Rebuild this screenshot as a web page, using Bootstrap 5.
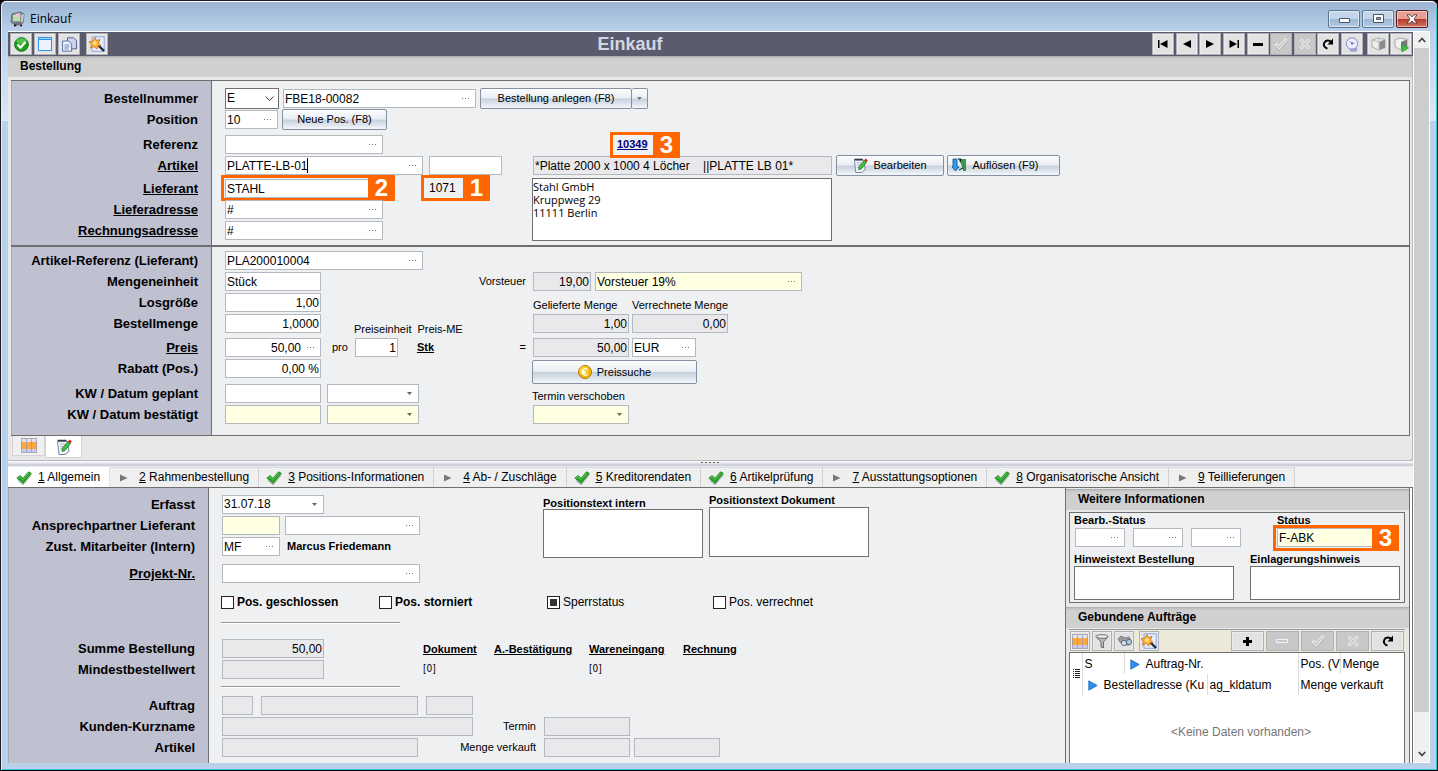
<!DOCTYPE html>
<html lang="de">
<head>
<meta charset="utf-8">
<meta name="viewport" content="width=device-width, initial-scale=1">
<title>Einkauf</title>
<link rel="stylesheet" href="https://cdn.jsdelivr.net/npm/bootstrap@5.3.0/dist/css/bootstrap.min.css">
<style>
:root{--pane:#eff0f2;--lilac:#bfc0d0;--line:#6f6f70;--fieldline:#b4b8bf;--orange:#ff6600;--row:21px}
body{font-family:"Liberation Sans",Arial,sans-serif;font-size:12px;line-height:15px;color:#000;background:#000}
a{color:inherit}
button{padding:0;color:inherit}
.win{min-height:100vh;border:1px solid #1c1c22;border-bottom-color:#000;border-radius:6px 6px 0 0;box-shadow:inset 0 1px #fff,inset 1px 0 #e3edf8,inset -1px -1px #35c4dc;padding:1px 7px 7px;
 background:linear-gradient(#9ab3d1 0,#b8d0ea 30px,#dce8f5 120px,#b9d1ea 120px)}
.titlebar{height:29px;padding:4px 2px 0;font-family:"Open Sans","Noto Sans",sans-serif}
.winbtns{gap:2px}
.winbtn{width:32px;height:18px;border:1px solid #5c7590;border-radius:2px;box-shadow:inset 0 0 0 1px rgba(255,255,255,.5);background:linear-gradient(#c3d5e9 50%,#9cb6d2 50%,#b5cce4)}
.winbtn.shut{border-color:#5a1a1a;background:linear-gradient(#e5a093 48%,#b8382a 50%,#cf7560)}
.tools{height:25px;background:#5a5c6d;border-top:1px solid #fff;padding:1px 1px 1px 2px;color:#000}
.tools h1{font-size:18px;line-height:22px;font-weight:700;color:#d3d7e4}
.tb{width:22px;height:22px;background:#e2e2e2;border:1px solid #aeb0b6;box-shadow:inset 0 0 0 1px #ececec;display:flex;align-items:center;justify-content:center;flex:none}
.tb:disabled{background:#c8c8c8;box-shadow:none}
.navset{width:211px}
.panel{background:#e8e8e8;border:1px solid #b9b9bb;border-top:0;border-left:0;border-radius:0 0 3px 3px}
.forms{margin:3px 2px 0 3px}
.phead{height:21px;line-height:21px;background:linear-gradient(#a8a8a8 0,#c8c8c8 2px,#d0d0d0 4px);font-weight:700;padding-left:12px;margin:0;font-size:12px}
.lpane{width:200px;background:var(--lilac);font-size:13px;font-weight:700;text-align:right;padding-right:13px;flex:none;border-left:1px solid #a5a6b8}
.lpane>*{display:block;height:var(--row);line-height:var(--row);color:#000;white-space:nowrap}
.cpane{background:var(--pane);border-left:1px solid var(--line);padding-left:13px}
.r{display:flex;align-items:center;height:var(--row);flex:none}
.g2{margin-top:2px!important}.g3{margin-top:3px!important}.g4{margin-top:4px!important}.g6{margin-top:6px!important}.g8{margin-top:8px!important}
.fld{display:flex;align-items:center;height:19px;border:1px solid var(--fieldline);background:#fff;position:relative;flex:none}
.fld input,input.fld,select.fld{min-width:0;font-size:12px;line-height:15px;padding:0 1px;color:#000;border-radius:0;outline:0}
.fld input{border:0;background:transparent;width:100%;height:17px}
.fld.num input,input.num{text-align:right}
.fld button{border:0;background:transparent;width:18px;height:17px;flex:none;display:flex;align-items:center;justify-content:center}
.ro{background:#e9e9eb!important}
.ye{background:#ffffe1!important}
select.fld{appearance:none;background:#fff url("data:image/svg+xml,%3Csvg xmlns='http://www.w3.org/2000/svg' width='5' height='3'%3E%3Cpath d='M0 0h5L2.500 3z' fill='%23666'/%3E%3C/svg%3E") no-repeat right 6px center}
select.due{background-color:#ffffe1}
select.kind{height:21px;border-color:#707070;background-image:url("data:image/svg+xml,%3Csvg xmlns='http://www.w3.org/2000/svg' width='9' height='6'%3E%3Cpath d='M.5.5l4 4 4-4' fill='none' stroke='%23444'/%3E%3C/svg%3E");background-position:right 4px center}
textarea.box{border:1px solid #707070;background:#fff;resize:none;display:block;padding:1px 0;outline:0;border-radius:0}
.gbtn{height:21px;border:1px solid #8391a3;border-radius:2px;font-size:11px;line-height:13px;background:linear-gradient(#fdfdfe 0,#e9edf2 48%,#c6d1dc 52%,#dfe6ee 80%,#f5f8fa);display:flex;align-items:center;justify-content:center;gap:5px;flex:none}
.sm{font-size:11px;line-height:13px;white-space:nowrap}
.call{position:absolute;border:3px solid var(--orange);height:26px;pointer-events:none}
.call b{position:absolute;right:-3px;top:-3px;width:27px;height:26px;line-height:26px;background:var(--orange);color:#fff;font-size:24px;text-align:center}
.caret{position:absolute;width:1px;height:15px;left:81px;top:1px;background:#000}
.w31{width:31px}.w43{width:43px}.w50{width:50px}.w53{width:53px}.w54{width:54px}.w58{width:58px}.w64{width:64px}.w73{width:73px}.w86{width:86px}.w92{width:92px}.w96{width:96px}.w102{width:102px}.w135{width:135px}.w158{width:158px}.w193{width:193px}.w196{width:196px}.w198{width:198px}.w207{width:207px}.w251{width:251px}.w299{width:299px}.w300{width:300px}.w120{width:120px}.w47{width:47px}
.lstack{width:307px;flex:none}
.modes{height:24px;padding-left:4px;align-items:flex-start}
.modes button{height:20px;width:33px;border:1px solid #d4d4d4;border-top:0;background:#f0f0f0}
.modes .on{height:22px;width:37px;background:#fff}
.splitter{height:6px;background:linear-gradient(#fff,#dfe3ea 40%,#c4c9d2 70%,#f4f5f7);display:flex;justify-content:center}
.tabs{flex-wrap:nowrap;height:21px;background:#f2f2f2;border-bottom:1px solid var(--line);--bs-nav-tabs-border-width:0px}
.tabs .nav-link{height:20px;padding:0 9px 0 7px;display:flex;align-items:center;gap:6px;border:0;border-right:1px solid #d0d0d0;border-top:1px solid #dcdcdc;border-radius:0;color:#000;background:#efefef;font-size:12px;white-space:nowrap}
.tabs .nav-link.active{background:#fff;border-top-color:#fff;padding-left:8px}
.tabs .nav-link svg{width:16px;flex:none}
.lower{min-height:270px}
.lower .lpane{padding-top:6px}
.rule{width:179px;height:2px;border:0;border-top:1px solid #999;background:#fff;opacity:1;margin:0}
.chk{display:flex;align-items:center;gap:3px}
.chk input{appearance:none;width:13px;height:13px;border:1px solid #222;background:#fff;margin:0}
.chk input:checked{background:#333;box-shadow:inset 0 0 0 2px #fff}
.checks{display:grid;grid-template-columns:158px 168px 166px auto;justify-content:start;margin-left:-1px}
.links{display:grid;grid-template-columns:71px 95px 94px auto;justify-content:start;font-size:11px;line-height:13px;row-gap:0}
.links span{font-family:"DejaVu Sans Condensed",sans-serif;font-size:10px}
.side{width:344px;flex:none;border-left:1px solid var(--line);background:#e8e8e8;padding-top:1px}
.edge{width:4px;border:1px solid var(--line);border-width:0 1px;background:#fff;flex:none}
.group{border:1px solid var(--line);background:var(--pane);margin:2px 4px 4px 3px;height:91px}
.minibar{background:#ece9d8;border-top:1px solid #9a9a9a;margin:1px 4px 0 3px;height:23px;padding:1px}
.minibar .tb{width:20px;height:20px}
.minibar .tb.wide{width:33px}
.listing{background:#fff;margin:0 4px 0 3px;border:1px solid var(--line);border-bottom:0}
.listing table{table-layout:fixed;width:100%;border-collapse:collapse}
.listing th{font-weight:400;height:21px;padding:2px 0 0 2px;border-left:1px solid #dcdcdc;white-space:nowrap;overflow:hidden}
.listing th svg{margin:0 6px 0 3px}
.listing th[rowspan]{border:0;padding:0}
.listing th[rowspan] svg{margin:0 0 0 3px}
.vbar{width:17px;background:#f0f0f0;border:1px solid #fff;flex:none}
.vbar button{height:16px;border:0;background:transparent}
.thumb{background:#cdcdcd;height:664px;flex-shrink:1}
</style>
</head>
<body>
<svg class="d-none" aria-hidden="true">
 <symbol id="dots" viewBox="0 0 8 1"><path d="M0 0h1v1H0zM3 0h1v1H3zM6 0h1v1H6z" fill="#777"/></symbol>
 <symbol id="tick" viewBox="0 0 16 14"><path d="M2 9.500 7 13.500 15.500 3.500" stroke="#9a9a9a" stroke-width="1.500" fill="none" opacity=".6"/><path d="M.8 7 4 4.500l3 2.700L12.500.8l2.800 1.400L7.200 12.500z" fill="#2aa52c" stroke="#187a1c" stroke-width=".7"/><path d="M2 7l2-1.300 3 2.800L12.800 2" stroke="#5fcf50" stroke-width=".9" fill="none"/></symbol>
 <symbol id="tri" viewBox="0 0 16 14"><path d="M3 3.500 10.500 7 3 10.500z" fill="#777"/></symbol>
 <symbol id="blue" viewBox="0 0 10 11"><path d="M.8.8 9.200 5.500.8 10.200z" fill="#2f8ff0" stroke="#1765c0" stroke-width=".8"/></symbol>
 <symbol id="grid" viewBox="0 0 16 15"><path d="M0 0h16v15H0z" fill="#e2e2f6"/><path d="M0 4h16v7H0z" fill="#ffa63c"/><path d="M0 11h16v4H0z" fill="#c9c9ee"/><path d="M.5 0v15M5.500 0v15M10.500 0v15M15.500 0v15" stroke="#9a98a0" fill="none" opacity=".75"/><path d="M0 .5h16M0 14.500h16" stroke="#a9a8b4"/></symbol>
 <symbol id="edit" viewBox="0 0 16 16"><path d="M1.500 2.500h10l1.500 10-4 3H3z" fill="#f4f6fb" stroke="#6a7090" stroke-width=".9"/><path d="M1.500 1.500h9" stroke="#333a50" stroke-width="1.500"/><path d="M4 5h5M4 7.500h4M4 10h2" stroke="#9a9fc0" stroke-width=".8"/><path d="M6 12.500 6.500 9l5.500-6.500 2.500 2L9 11.500z" fill="#3fc03f" stroke="#187a1c" stroke-width=".8"/><path d="m12 2.500 1.500-2 2.300 1.800-1.300 2.200z" fill="#e0231c"/></symbol>
 <symbol id="wand" viewBox="0 0 16 16"><path d="M3 .8h12.200v14.500H3z" fill="#e6eefb" stroke="#8ca6dd"/><path d="m9 9 6 6" stroke="#222c3c" stroke-width="2.400"/><path d="m6 1.500 1.500 3L11 3.500 9.500 7l2.500 2.500-3.500.5L8 13 5 10.500 1.500 12l1-3.500L0 6l3.500-.7z" fill="#ffb733" stroke="#c9681a" stroke-width=".8"/><circle cx="6" cy="7" r="1.700" fill="#ffe9a0"/></symbol>
 <symbol id="redo" viewBox="0 0 14 14"><path d="M6.500 11.500A4 4 0 1 1 10 5" fill="none" stroke="#000" stroke-width="2"/><path d="M12 1.500V7.500H6.500z"/></symbol>
 <symbol id="okay" viewBox="0 0 14 14"><path d="m1 8 2-1.500 2 2L11.500 1.500 13 3 5.500 12z" fill="#c8c8c8" stroke="#f8f8f8"/><path d="m1 9 4.500 4.500L13.500 4" fill="none" stroke="#a2a2a2" stroke-width=".6"/></symbol>
 <symbol id="nope" viewBox="0 0 14 14"><path d="m2 3.500 1.500-1.500L7 5.500 10.500 2 12 3.500 8.500 7l3.500 3.500-1.500 1.500L7 8.500 3.500 12 2 10.500 5.500 7z" fill="#c8c8c8" stroke="#f8f8f8"/></symbol>
</svg>

<div class="win d-flex flex-column">
 <header class="titlebar d-flex align-items-center">
  <svg width="16" height="16" viewBox="0 0 16 16" class="me-1"><path d="m2 3 8-2 4 2-1 9-8 2-4-3z" fill="#8f9096" stroke="#55565c" stroke-width=".8"/><path d="M3 4h7v6H3z" fill="#b8e0a8"/><path d="m5 3 5-1v4H5z" fill="#e9c4d4"/><path d="m11 4 3-1-1 8-2 1z" fill="#c4c5cb"/><path d="M3 12l8-1 2 2-7 2z" fill="#6e6f75"/><circle cx="5" cy="14.500" r="1"/><circle cx="11" cy="14.500" r="1"/></svg>
  <span class="flex-grow-1">Einkauf</span>
  <div class="winbtns d-flex">
   <button class="winbtn d-flex align-items-center justify-content-center" aria-label="Minimieren"><svg width="11" height="11" viewBox="0 0 11 11"><path d="M.5 5.500h10v4H.5z" fill="#fff" stroke="#4b5668"/></svg></button>
   <button class="winbtn d-flex align-items-center justify-content-center" aria-label="Maximieren"><svg width="11" height="9" viewBox="0 0 11 9"><path d="M.5.500h10v8H.5z" fill="#fff" stroke="#4b5668"/><path d="M3.500 3.500h4v2h-4z" fill="#8fb0d6" stroke="#4b5668"/></svg></button>
   <button class="winbtn shut d-flex align-items-center justify-content-center" aria-label="Schließen"><svg width="12" height="10" viewBox="0 0 12 10"><path d="M1 .8h3L6 3 8 .8h3L8 5l3 4.200H8L6 7 4 9.200H1L4 5z" fill="#fff" stroke="#57383c" stroke-width=".9"/></svg></button>
  </div>
 </header>

 <div class="d-flex flex-grow-1">
 <main class="flex-grow-1 d-flex flex-column">
  <div class="tools d-flex align-items-start">
   <div class="d-flex" style="gap:6px">
    <div class="d-flex" style="gap:2px">
     <button class="tb" aria-label="OK"><svg width="15" height="15" viewBox="0 0 15 15"><circle cx="7.500" cy="7.500" r="6.800" fill="#1da01f" stroke="#0d7010"/><ellipse cx="7.500" cy="4" rx="5" ry="2.800" fill="#6bd15f" opacity=".7"/><path d="m3.500 7.500 3 3L11.500 5" fill="none" stroke="#fff" stroke-width="2.300"/></svg></button>
     <button class="tb" aria-label="Fenster"><svg width="14" height="14" viewBox="0 0 14 14"><path d="M.5.500h13v13H.5z" fill="#eef2ff" stroke="#2f93e8"/><path d="M0 0h14v3H0z" fill="#2f93e8"/><path d="M1 1h12v1H1z" fill="#9fd6ff"/></svg></button>
     <button class="tb" aria-label="Kopieren"><svg width="15" height="15" viewBox="0 0 15 15"><path d="M5.500.800h6l3 3v8h-9z" fill="#cfd3ee" stroke="#5b639c"/><path d="M.6 4h6l3 3v7.200h-9z" fill="#eef2fc" stroke="#5b76ac"/><path d="M2.500 8h5M2.500 10h5M2.500 12h4" stroke="#6b86c4"/></svg></button>
    </div>
    <button class="tb" aria-label="Assistent"><svg width="16" height="16"><use href="#wand"/></svg></button>
   </div>
   <h1 class="flex-grow-1 text-center m-0">Einkauf</h1>
   <div class="d-flex gap-1">
    <div class="navset d-flex justify-content-between">
     <button class="tb" aria-label="Erster"><svg width="10" height="8" viewBox="0 0 10 8"><path d="M0 0h1.500v8H0zM9.500 0v8L2 4z"/></svg></button>
     <button class="tb" aria-label="Zurück"><svg width="8" height="8" viewBox="0 0 8 8"><path d="M8 0v8L0 4z"/></svg></button>
     <button class="tb" aria-label="Weiter"><svg width="8" height="8" viewBox="0 0 8 8"><path d="M0 0v8l8-4z"/></svg></button>
     <button class="tb" aria-label="Letzter"><svg width="10" height="8" viewBox="0 0 10 8"><path d="M8.500 0H10v8H8.500zM.5 0v8L8 4z"/></svg></button>
     <button class="tb" aria-label="Löschen"><svg width="10" height="3"><path d="M0 0h10v3H0z"/></svg></button>
     <button class="tb" disabled aria-label="Übernehmen"><svg width="14" height="14"><use href="#okay"/></svg></button>
     <button class="tb" disabled aria-label="Verwerfen"><svg width="14" height="14"><use href="#nope"/></svg></button>
     <button class="tb" aria-label="Aktualisieren"><svg width="14" height="14"><use href="#redo"/></svg></button>
     <button class="tb" aria-label="Historie"><svg width="14" height="15" viewBox="0 0 14 15"><ellipse cx="8.500" cy="12.500" rx="3.500" ry="2" fill="#a9a9d8" stroke="#8a8ac6" stroke-width=".6"/><circle cx="7" cy="6.500" r="5.700" fill="#ececff" stroke="#8a8ac6"/><path d="M4.500 4l2.500 2.500L9.500 6" stroke="#8585c4" stroke-width=".8" fill="none"/><circle cx="7" cy="6.500" r="1" fill="#4a4a90"/></svg></button>
    </div>
    <div class="d-flex" style="gap:1px">
     <button class="tb" aria-label="Paket"><svg width="15" height="14" viewBox="0 0 15 14"><path d="M1 3 7 1l7 1.500v8L8 13l-7-3z" fill="#ededed" stroke="#a0a0a0" stroke-width=".8"/><path d="M8 5l6-2.500v8L8 13z" fill="#8b8b8b"/><path d="M1 3l7 2v8" fill="none" stroke="#bbb"/><path d="M8 1.500v3" stroke="#7cc"/></svg></button>
     <button class="tb" aria-label="Paket öffnen"><svg width="16" height="15" viewBox="0 0 16 15"><path d="M2 3 7 1l7 1.500v8L8 13l-6-3z" fill="#f2f2f2" stroke="#999" stroke-width=".8"/><path d="M8 5l6-2.500v8L8 13z" fill="#777"/><path d="M9 7.500v7.500l6.500-4z" fill="#45c43c" stroke="#1f8a22" stroke-width=".6"/></svg></button>
    </div>
   </div>
  </div>

  <section class="panel">
   <h2 class="phead">Bestellung</h2>
   <div class="forms">
    <!-- Bestellkopf -->
    <div class="d-flex" style="border:1px solid var(--line);border-left:0;border-bottom-width:2px">
     <div class="lpane pb-1" style="padding-top:7px">
      <label for="bnr">Bestellnummer</label><label for="pos">Position</label><label for="ref" class="g4">Referenz</label>
      <a href="#artikel">Artikel</a><a href="#lieferant" class="g2">Lieferant</a><a href="#ladr">Lieferadresse</a><a href="#radr">Rechnungsadresse</a>
     </div>
     <div class="cpane flex-grow-1 pb-1" style="padding-top:7px">
      <div class="r gap-1"><select class="fld kind w54" aria-label="Belegart"><option>E</option></select>
       <div class="fld w193"><input id="bnr" value="FBE18-00082"><button aria-label="Auswahl"><svg width="8" height="1"><use href="#dots"/></svg></button></div>
       <div class="d-flex"><button class="gbtn" style="width:152px">Bestellung anlegen (F8)</button><button class="gbtn border-start-0" style="width:16px" aria-label="Mehr"><svg width="5" height="3"><path d="M0 0h5L2.500 3z" fill="#777"/></svg></button></div></div>
      <div class="r gap-1"><div class="fld w53"><input id="pos" value="10"><button aria-label="Auswahl"><svg width="8" height="1"><use href="#dots"/></svg></button></div><button class="gbtn" style="width:105px">Neue Pos. (F8)</button></div>
      <div class="d-flex">
       <div class="lstack">
        <div class="r g4"><div class="fld w158"><input id="ref"><button aria-label="Auswahl"><svg width="8" height="1"><use href="#dots"/></svg></button></div></div>
        <div class="r" style="gap:6px"><div class="fld w198"><input id="artikel" aria-label="Artikel" value="PLATTE-LB-01"><span class="caret"></span><button aria-label="Auswahl"><svg width="8" height="1"><use href="#dots"/></svg></button></div><input class="fld w73" aria-label="Variante"></div>
        <div class="r g2" style="gap:46px"><div class="fld w158"><input id="lieferant" aria-label="Lieferant" value="STAHL"><div class="call" style="left:-5px;top:-5px;width:174px"><b>2</b></div></div>
         <div class="position-relative"><span>1071</span><div class="call" style="left:-8px;top:-6px;width:69px"><b>1</b></div></div></div>
        <div class="r"><div class="fld w158"><input id="ladr" aria-label="Lieferadresse" value="#"><button aria-label="Auswahl"><svg width="8" height="1"><use href="#dots"/></svg></button></div></div>
        <div class="r"><div class="fld w158"><input id="radr" aria-label="Rechnungsadresse" value="#"><button aria-label="Auswahl"><svg width="8" height="1"><use href="#dots"/></svg></button></div></div>
       </div>
       <div>
        <div class="r g4 position-relative" style="padding-left:85px;z-index:2"><a href="#beleg" class="fw-bold sm" style="color:#000080">10349</a><div class="call" style="left:78px;top:-2px;width:70px"><b>3</b></div></div>
        <div class="r"><input class="fld ro w299" style="margin:0 4px 0 1px" aria-label="Artikelbezeichnung" readonly value="*Platte 2000 x 1000 4 Löcher    ||PLATTE LB 01*">
         <button class="gbtn" style="width:108px"><svg width="15" height="15"><use href="#edit"/></svg>Bearbeiten</button>
         <button class="gbtn" style="width:113px;margin-left:3px;padding-right:16px"><svg width="15" height="15" viewBox="0 0 15 15"><path d="M1 1h4v8h2L3.500 13 0 9h1z" fill="#2aa0f0" stroke="#0b4f90" stroke-width=".8"/><path d="M7 2h7M8 4h6M9 6h5M10 8h4M10 10h4M11 12h3" stroke="#0c7a17" stroke-width="1.500"/><path d="m6 1 3 0-1 3M7 12l4-2" stroke="#111" fill="none"/></svg>Auflösen (F9)</button></div>
        <textarea class="box w300 g2" style="height:63px;font:11px/13px 'Open Sans','Noto Sans',sans-serif" aria-label="Anschrift">Stahl GmbH
Kruppweg 29
11111 Berlin</textarea>
       </div>
      </div>
     </div>
    </div>
    <!-- Position -->
    <div class="d-flex" style="border:1px solid var(--line);border-width:0 1px 1px 0">
     <div class="lpane" style="padding-top:3px;padding-bottom:10px">
      <label for="aref">Artikel-Referenz (Lieferant)</label><label for="me">Mengeneinheit</label><label for="los">Losgröße</label><label for="bm">Bestellmenge</label>
      <a href="#preis" class="g3">Preis</a><label for="rab">Rabatt (Pos.)</label><label for="kwg" class="g4">KW / Datum geplant</label><label for="kwb">KW / Datum bestätigt</label>
     </div>
     <div class="cpane flex-grow-1 d-flex" style="padding-top:3px">
      <div class="lstack">
       <div class="r"><div class="fld w198"><input id="aref" value="PLA200010004"><button aria-label="Auswahl"><svg width="8" height="1"><use href="#dots"/></svg></button></div></div>
       <div class="r"><input class="fld w96" id="me" value="Stück"><label for="vst" class="sm ms-auto" style="margin-right:6px">Vorsteuer</label></div>
       <div class="r"><input class="fld w96 num" id="los" value="1,00"></div>
       <div class="r"><input class="fld w96 num" id="bm" value="1,0000"><div class="d-flex sm align-self-end" style="margin-left:33px;gap:6px;line-height:10px"><label for="pe">Preiseinheit</label><span>Preis-ME</span></div></div>
       <div class="r g3"><div class="fld w96 num"><input id="preis" aria-label="Preis" value="50,00"><button aria-label="Auswahl"><svg width="8" height="1"><use href="#dots"/></svg></button></div>
        <span class="sm" style="margin:0 7px 0 11px">pro</span><input id="pe" class="fld w43 num" value="1"><a href="#me" class="sm fw-bold" style="margin-left:19px">Stk</a><span class="sm ms-auto" style="margin-right:6px">=</span></div>
       <div class="r"><input class="fld w96 num" id="rab" value="0,00 %"></div>
       <div class="r g4" style="gap:6px"><input class="fld w96" id="kwg"><select class="fld w92" aria-label="Datum geplant"></select></div>
       <div class="r" style="gap:6px"><input class="fld ye w96" id="kwb"><select class="fld due w92" aria-label="Datum bestätigt"></select></div>
      </div>
      <div style="margin-left:1px">
       <div class="r"></div>
       <div class="r gap-1"><input class="fld num ro w58" id="vst" readonly value="19,00"><div class="fld ye w207"><input aria-label="Steuerart" value="Vorsteuer 19%"><button aria-label="Auswahl"><svg width="8" height="1"><use href="#dots"/></svg></button></div></div>
       <div class="r sm align-items-end"><label for="gm" style="width:99px;line-height:15px">Gelieferte Menge</label><label for="vm" style="line-height:15px">Verrechnete Menge</label></div>
       <div class="r" style="gap:3px"><input class="fld num ro w96" id="gm" readonly value="1,00"><input class="fld num ro w96" id="vm" readonly value="0,00"></div>
       <div class="r g3" style="gap:3px"><input class="fld num ro w96" readonly aria-label="Gesamtpreis" value="50,00"><div class="fld w64"><input aria-label="Währung" value="EUR"><button aria-label="Auswahl"><svg width="8" height="1"><use href="#dots"/></svg></button></div></div>
       <button class="gbtn" style="width:165px;height:24px;margin:2px 0 0 -1px"><svg width="14" height="14" viewBox="0 0 14 14"><circle cx="7" cy="7" r="6.500" fill="#f2b705" stroke="#b27a00"/><circle cx="6" cy="5.500" r="4.500" fill="#ffe052" opacity=".6"/><path d="M9.500 4.500a3.200 3.200 0 1 0 0 5M3.500 6.500h4M3.500 8h4" stroke="#fff" stroke-width="1.300" fill="none"/></svg>Preissuche</button>
       <label for="tv" class="sm d-block" style="line-height:20px;padding-top:2px;margin:0 0 -2px -1px">Termin verschoben</label>
       <div class="r"><select id="tv" class="fld due w96"></select></div>
      </div>
     </div>
    </div>
   </div>
   <div class="modes d-flex">
    <button aria-label="Tabelle"><svg width="16" height="15"><use href="#grid"/></svg></button><button class="on" aria-label="Maske"><svg width="16" height="16"><use href="#edit"/></svg></button>
   </div>
  </section>

  <div class="splitter"><svg width="19" height="3" viewBox="0 0 19 3"><path d="M0 1h2v1H0zM4 1h2v1H4zM8 1h2v1H8zM12 1h2v1h-2zM16 1h2v1h-2z" fill="#666"/></svg></div>
  <ul class="nav nav-tabs tabs">
   <li><a class="nav-link active" href="#t1"><svg height="14"><use href="#tick"/></svg><span><u>1</u> Allgemein</span></a></li>
   <li><a class="nav-link" href="#t2"><svg height="14"><use href="#tri"/></svg><span><u>2</u> Rahmenbestellung</span></a></li>
   <li><a class="nav-link" href="#t3"><svg height="14"><use href="#tick"/></svg><span><u>3</u> Positions-Informationen</span></a></li>
   <li><a class="nav-link" href="#t4"><svg height="14"><use href="#tri"/></svg><span><u>4</u> Ab- / Zuschläge</span></a></li>
   <li><a class="nav-link" href="#t5"><svg height="14"><use href="#tick"/></svg><span><u>5</u> Kreditorendaten</span></a></li>
   <li><a class="nav-link" href="#t6"><svg height="14"><use href="#tick"/></svg><span><u>6</u> Artikelprüfung</span></a></li>
   <li><a class="nav-link" href="#t7"><svg height="14"><use href="#tri"/></svg><span><u>7</u> Ausstattungsoptionen</span></a></li>
   <li><a class="nav-link" href="#t8"><svg height="14"><use href="#tick"/></svg><span><u>8</u> Organisatorische Ansicht</span></a></li>
   <li><a class="nav-link" href="#t9"><svg height="14"><use href="#tri"/></svg><span><u>9</u> Teillieferungen</span></a></li>
  </ul>

  <section class="lower d-flex flex-grow-1" id="t1">
   <div class="lpane">
    <label for="erf">Erfasst</label><label for="ap">Ansprechpartner Lieferant</label><label for="zm">Zust. Mitarbeiter (Intern)</label><a href="#prj" class="g6">Projekt-Nr.</a>
    <label for="sum" style="margin-top:54px">Summe Bestellung</label><label for="mbw">Mindestbestellwert</label>
    <label for="auf" style="margin-top:15px">Auftrag</label><label for="kk">Kunden-Kurzname</label><label for="art2">Artikel</label>
   </div>
   <div class="cpane flex-grow-1" style="padding-top:6px">
    <div class="d-flex">
     <div style="width:321px">
      <div class="r"><select class="fld w102" id="erf"><option>31.07.18</option></select></div>
      <div class="r" style="gap:5px"><input class="fld ye w58" id="ap"><div class="fld w135"><input aria-label="Name Ansprechpartner"><button aria-label="Auswahl"><svg width="8" height="1"><use href="#dots"/></svg></button></div></div>
      <div class="r" style="gap:7px"><div class="fld w58"><input id="zm" value="MF"><button aria-label="Auswahl"><svg width="8" height="1"><use href="#dots"/></svg></button></div><b class="sm">Marcus Friedemann</b></div>
      <div class="r g6"><div class="fld w198"><input id="prj" aria-label="Projekt-Nr."><button aria-label="Auswahl"><svg width="8" height="1"><use href="#dots"/></svg></button></div></div>
     </div>
     <div style="margin-right:6px"><label for="pti" class="sm fw-bold d-block" style="padding-top:3px;line-height:12px">Positionstext intern</label><textarea id="pti" class="box" style="width:160px;height:49px"></textarea></div>
     <div><label for="ptd" class="sm fw-bold d-block pb-0">Positionstext Dokument</label><textarea id="ptd" class="box" style="width:160px;height:50px"></textarea></div>
    </div>
    <div class="checks r d-grid g8">
     <label class="chk fw-bold"><input type="checkbox">Pos. geschlossen</label><label class="chk fw-bold"><input type="checkbox">Pos. storniert</label><label class="chk"><input type="checkbox" checked>Sperrstatus</label><label class="chk"><input type="checkbox">Pos. verrechnet</label>
    </div>
    <hr class="rule" style="margin:9px 0 14px -1px">
    <div class="d-flex">
     <div style="width:201px"><div class="r"><input class="fld num ro w102" id="sum" readonly value="50,00"></div><div class="r"><input class="fld ro w102" id="mbw" readonly></div></div>
     <div class="links" style="padding-top:5px"><a class="fw-bold" href="#dok">Dokument</a><a class="fw-bold" href="#ab">A.-Bestätigung</a><a class="fw-bold" href="#we">Wareneingang</a><a class="fw-bold" href="#re">Rechnung</a><span>[0]</span><span></span><span>[0]</span></div>
    </div>
    <hr class="rule" style="margin:6px 0 7px -1px">
    <div class="r gap-2"><input class="fld ro w31" id="auf" readonly><input class="fld ro" style="width:157px" readonly aria-label="Auftragsnummer"><input class="fld ro w47" readonly aria-label="Auftragsposition"></div>
    <div class="r gap-2"><div class="d-flex align-items-center justify-content-between" style="width:314px"><input class="fld ro w251" id="kk" readonly><label for="tm" class="sm">Termin</label></div><input class="fld ro w86" id="tm" readonly></div>
    <div class="r gap-2"><div class="d-flex align-items-center justify-content-between" style="width:314px"><input class="fld ro w196" id="art2" readonly><label for="mv" class="sm">Menge verkauft</label></div><div class="d-flex gap-1"><input class="fld ro w86" id="mv" readonly><input class="fld ro w86" readonly aria-label="Einheit"></div></div>
   </div>

   <aside class="side d-flex flex-column">
    <h2 class="phead">Weitere Informationen</h2>
    <div class="group">
     <div class="d-flex justify-content-between" style="padding:1px 7px 0 4px">
      <div><div class="sm fw-bold">Bearb.-Status</div>
       <div class="d-flex gap-2" style="padding:1px 0 0 1px"><div class="fld w50"><input aria-label="Bearbeitungsstatus 1"><button aria-label="Auswahl"><svg width="8" height="1"><use href="#dots"/></svg></button></div><div class="fld w50"><input aria-label="Bearbeitungsstatus 2"><button aria-label="Auswahl"><svg width="8" height="1"><use href="#dots"/></svg></button></div><div class="fld w50"><input aria-label="Bearbeitungsstatus 3"><button aria-label="Auswahl"><svg width="8" height="1"><use href="#dots"/></svg></button></div></div></div>
      <div><label for="st" class="sm fw-bold d-block">Status</label><div class="fld ye w120" style="margin-top:1px"><input id="st" value="F-ABK"><div class="call" style="left:-5px;top:-4px;width:126px"><b>3</b></div></div></div>
     </div>
     <div class="d-flex justify-content-between" style="padding:6px 4px 0 4px">
      <div><label for="hb" class="sm fw-bold d-block">Hinweistext Bestellung</label><textarea id="hb" class="box" style="width:160px;height:34px"></textarea></div>
      <div><label for="eh" class="sm fw-bold d-block">Einlagerungshinweis</label><textarea id="eh" class="box" style="width:150px;height:34px"></textarea></div>
     </div>
    </div>
    <h2 class="phead">Gebundene Aufträge</h2>
    <div class="minibar d-flex justify-content-between">
     <div class="d-flex" style="gap:2px"><button class="tb" aria-label="Tabelle"><svg width="16" height="15"><use href="#grid"/></svg></button>
      <button class="tb" aria-label="Filter"><svg width="14" height="14" viewBox="0 0 14 14"><path d="M1 2.500 6 8v5l2.500 1V8L13 2.500z" fill="#b9b9b9" stroke="#555" stroke-width=".8"/><ellipse cx="7" cy="2.500" rx="6" ry="1.800" fill="#eee" stroke="#555" stroke-width=".8"/></svg></button>
      <button class="tb" aria-label="Suchen"><svg width="15" height="12" viewBox="0 0 15 12"><path d="m1 4 3-3 4 2 4-1 2 4-2 4H8L3 7z" fill="#9a9a9e" stroke="#666" stroke-width=".7"/><circle cx="7" cy="8" r="2.600" fill="#cfe2f6" stroke="#555" stroke-width=".8"/><circle cx="12" cy="7" r="2.600" fill="#a9cdf0" stroke="#555" stroke-width=".8"/></svg></button>
      <button class="tb" style="margin-left:3px" aria-label="Assistent"><svg width="16" height="16"><use href="#wand"/></svg></button></div>
     <div class="d-flex" style="gap:2px"><button class="tb wide" aria-label="Neu"><svg width="9" height="9"><path d="M3 0h3v3h3v3H6v3H3V6H0V3h3z"/></svg></button><button class="tb wide" disabled aria-label="Löschen"><svg width="13" height="5"><path d="M.5.500h11v3H.5z" fill="#c8c8c8" stroke="#f4f4f4"/></svg></button><button class="tb wide" disabled aria-label="Übernehmen"><svg width="14" height="14"><use href="#okay"/></svg></button><button class="tb wide" disabled aria-label="Verwerfen"><svg width="14" height="14"><use href="#nope"/></svg></button><button class="tb wide" aria-label="Aktualisieren"><svg width="14" height="14"><use href="#redo"/></svg></button></div>
    </div>
    <div class="listing flex-grow-1">
     <table>
      <colgroup><col style="width:12px"><col style="width:42px"><col style="width:83px"><col style="width:91px"><col style="width:42px"><col></colgroup>
      <thead>
       <tr><th rowspan="2"><svg width="8" height="10" viewBox="0 0 8 10"><path d="M0 .5h1M0 2.500h1M0 4.500h1M0 6.500h1M0 8.500h1M2 .5h5M2 2.500h5M2 4.500h5M2 6.500h5M2 8.500h5" stroke="#222"/></svg></th><th>S</th><th colspan="2"><svg width="10" height="11"><use href="#blue"/></svg>Auftrag-Nr.</th><th>Pos. (V</th><th>Menge</th></tr>
       <tr><th colspan="2"><svg width="10" height="11"><use href="#blue"/></svg>Bestelladresse (Ku</th><th>ag_kldatum</th><th colspan="2">Menge verkauft</th></tr>
      </thead>
     </table>
     <div class="text-center pt-4 ps-2" style="color:#777"><div style="padding-top:6px">&lt;Keine Daten vorhanden&gt;</div></div>
    </div>
   </aside>
   <div class="edge"></div>
  </section>
 </main>
 <div class="vbar d-flex flex-column">
  <button aria-label="Nach oben"><svg width="8" height="6" viewBox="0 0 8 6" class="d-block mx-auto"><path d="m.8 5 3.200-3.500L7.200 5" fill="none" stroke="#444" stroke-width="1.800"/></svg></button>
  <div class="thumb"></div>
  <button class="mt-auto" aria-label="Nach unten"><svg width="8" height="6" viewBox="0 0 8 6" class="d-block mx-auto"><path d="m.8 1 3.200 3.500L7.200 1" fill="none" stroke="#444" stroke-width="1.800"/></svg></button>
 </div>
 </div>
</div>
<script src="https://cdn.jsdelivr.net/npm/bootstrap@5.3.0/dist/js/bootstrap.bundle.min.js"></script>
</body>
</html>
